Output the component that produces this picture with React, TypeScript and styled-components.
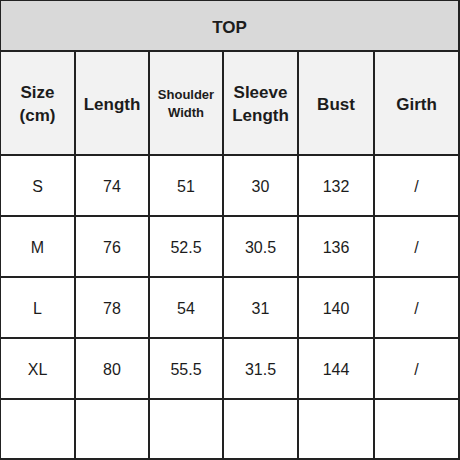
import styled, { createGlobalStyle } from "styled-components";

const GlobalStyle = createGlobalStyle`
  html, body {
    margin: 0;
    padding: 0;
    background: #ffffff;
  }
  body {
    font-family: "Liberation Sans", Arial, sans-serif;
    color: #1c1c1c;
  }
`;

const rows = [
  ["S", "74", "51", "30", "132", "/"],
  ["M", "76", "52.5", "30.5", "136", "/"],
  ["L", "78", "54", "31", "140", "/"],
  ["XL", "80", "55.5", "31.5", "144", "/"],
  ["", "", "", "", "", ""],
];

const Sheet = styled.div`
  width: 460px;
  height: 460px;
  box-sizing: border-box;
  display: grid;
  grid-template-columns: 73px 72px 72px 73px 74px 83px;
  grid-template-rows: 49px 102px 59px 59px 59px 59px 58px;
  gap: 2px;
  background: #222222;
  padding: 1px 2px 2px 1px;
`;

const Cell = styled.div<{ $tone?: "title" | "head" | "body"; $span?: number }>`
  display: flex;
  align-items: center;
  justify-content: center;
  text-align: center;
  box-sizing: border-box;
  padding-top: ${(p) => (p.$tone === "title" ? "3px" : "2px")};
  grid-column: ${(p) => (p.$span ? `span ${p.$span}` : "auto")};
  background: ${(p) =>
    p.$tone === "title" ? "#d9d9d9" : p.$tone === "head" ? "#f2f2f2" : "#ffffff"};
  font-weight: ${(p) => (p.$tone === "body" ? 400 : 700)};
  font-size: ${(p) => (p.$tone === "body" ? "16px" : "17px")};
  line-height: 23px;
`;

const Small = styled.span`
  font-size: 13px;
  line-height: 18px;
`;

export default function App() {
  return (
    <>
      <GlobalStyle />
      <Sheet>
        <Cell $tone="title" $span={6}>
          TOP
        </Cell>
        <Cell $tone="head">
          Size
          <br />
          (cm)
        </Cell>
        <Cell $tone="head">Length</Cell>
        <Cell $tone="head">
          <Small>
            Shoulder
            <br />
            Width
          </Small>
        </Cell>
        <Cell $tone="head">
          Sleeve
          <br />
          Length
        </Cell>
        <Cell $tone="head">Bust</Cell>
        <Cell $tone="head">Girth</Cell>
        {rows.map((row, i) =>
          row.map((value, j) => (
            <Cell key={`${i}-${j}`} $tone="body">
              {value}
            </Cell>
          ))
        )}
      </Sheet>
    </>
  );
}
